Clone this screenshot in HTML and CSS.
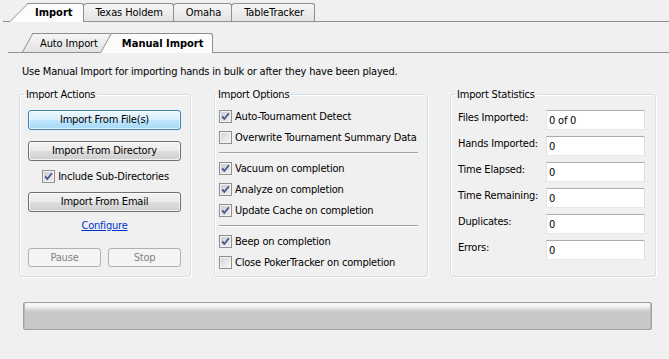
FILE: index.html
```html
<!DOCTYPE html>
<html lang="en">
<head>
  <meta charset="UTF-8" />
  <title>Import</title>
  <link rel="stylesheet" href="styles.css">
</head>
<body>

  <div class="tabbar tabbar-main">
    <div class="tab tab-active tab-first slant-wide">Import</div>
    <div class="tab">Texas Holdem</div>
    <div class="tab">Omaha</div>
    <div class="tab">TableTracker</div>
  </div>

  <div class="tabbar tabbar-sub">
    <div class="tab tab-first slant-narrow">Auto Import</div>
    <div class="tab tab-active slant-narrow">Manual Import</div>
  </div>

  <div class="page">
    <p class="intro">Use Manual Import for importing hands in bulk or after they have been played.</p>

    <div class="groups">
      <fieldset class="group group-actions">
        <legend>Import Actions</legend>
        <button class="btn btn-focus">Import From File(s)</button>
        <button class="btn">Import From Directory</button>
        <label class="check-row check-center">
          <span class="cb checked"><svg viewBox="0 0 9 9" width="9" height="9"><path d="M1.2 4.4l2.1 2.6L7.9 1.3" fill="none" stroke="#3f5183" stroke-width="1.7"/></svg></span>
          Include Sub-Directories
        </label>
        <button class="btn">Import From Email</button>
        <a class="link" href="#">Configure</a>
        <div class="btn-pair">
          <button class="btn" disabled>Pause</button>
          <button class="btn" disabled>Stop</button>
        </div>
      </fieldset>

      <fieldset class="group group-options">
        <legend>Import Options</legend>
        <label class="check-row">
          <span class="cb checked"><svg viewBox="0 0 9 9" width="9" height="9"><path d="M1.2 4.4l2.1 2.6L7.9 1.3" fill="none" stroke="#3f5183" stroke-width="1.7"/></svg></span>
          Auto-Tournament Detect
        </label>
        <label class="check-row">
          <span class="cb"></span>
          Overwrite Tournament Summary Data
        </label>
        <div class="sep"></div>
        <label class="check-row">
          <span class="cb checked"><svg viewBox="0 0 9 9" width="9" height="9"><path d="M1.2 4.4l2.1 2.6L7.9 1.3" fill="none" stroke="#3f5183" stroke-width="1.7"/></svg></span>
          Vacuum on completion
        </label>
        <label class="check-row">
          <span class="cb checked"><svg viewBox="0 0 9 9" width="9" height="9"><path d="M1.2 4.4l2.1 2.6L7.9 1.3" fill="none" stroke="#3f5183" stroke-width="1.7"/></svg></span>
          Analyze on completion
        </label>
        <label class="check-row">
          <span class="cb checked"><svg viewBox="0 0 9 9" width="9" height="9"><path d="M1.2 4.4l2.1 2.6L7.9 1.3" fill="none" stroke="#3f5183" stroke-width="1.7"/></svg></span>
          Update Cache on completion
        </label>
        <div class="sep"></div>
        <label class="check-row">
          <span class="cb checked"><svg viewBox="0 0 9 9" width="9" height="9"><path d="M1.2 4.4l2.1 2.6L7.9 1.3" fill="none" stroke="#3f5183" stroke-width="1.7"/></svg></span>
          Beep on completion
        </label>
        <label class="check-row">
          <span class="cb"></span>
          Close PokerTracker on completion
        </label>
      </fieldset>

      <fieldset class="group group-stats">
        <legend>Import Statistics</legend>
        <div class="stat"><span class="stat-label">Files Imported:</span><span class="stat-value">0 of 0</span></div>
        <div class="stat"><span class="stat-label">Hands Imported:</span><span class="stat-value">0</span></div>
        <div class="stat"><span class="stat-label">Time Elapsed:</span><span class="stat-value">0</span></div>
        <div class="stat"><span class="stat-label">Time Remaining:</span><span class="stat-value">0</span></div>
        <div class="stat"><span class="stat-label">Duplicates:</span><span class="stat-value">0</span></div>
        <div class="stat"><span class="stat-label">Errors:</span><span class="stat-value">0</span></div>
      </fieldset>
    </div>

    <div class="progress"></div>
  </div>

</body>
</html>
```

FILE: styles.css
```css
:root {
  --bg: #f0f0f0;
  --tab-border: #8e8f8f;
  --group-border: #d5dfe5;
  --btn-border: #707070;
}

body {
  margin: 0;
  background: var(--bg);
  color: #000;
  font-family: "DejaVu Sans Condensed", "DejaVu Sans", sans-serif;
  font-stretch: condensed;
  font-size: 11px;
  line-height: 13px;
  letter-spacing: -0.2px;
}

/* tabs */

.tabbar {
  display: flex;
  align-items: flex-end;
  border-bottom: 1px solid var(--tab-border);
}

.tabbar-main {
  margin-left: 3px;
  padding-top: 3px;
}

.tabbar-sub {
  margin-left: 8px;
  padding-top: 11px;
}

.tab {
  position: relative;
  z-index: 1;
  height: 18px;
  box-sizing: border-box;
  margin-left: -1px;
  padding: 2px 10px 0 12px;
  border: 1px solid var(--tab-border);
  border-bottom: 0;
  border-radius: 4px 3px 0 0;
  background: linear-gradient(#f6f6f6, #e3e3e3);
  line-height: 14px;
  letter-spacing: -0.1px;
  white-space: nowrap;
}

.tabbar-sub .tab {
  height: 19px;
  padding-top: 3px;
}

.tab-active {
  z-index: 2;
  height: 19px;
  margin-bottom: -1px;
  background: #fcfcfc;
  font-weight: bold;
  letter-spacing: 0;
}

.tabbar-sub .tab-active {
  height: 20px;
}

.slant-wide,
.slant-narrow {
  border-left: 0;
  border-top-left-radius: 0;
}

.slant-wide::before,
.slant-narrow::before {
  content: "";
  position: absolute;
  z-index: -1;
  top: -1px;
  bottom: 0;
  width: 24px;
  border-left: 1px solid var(--tab-border);
  border-top: 1px solid var(--tab-border);
  background: inherit;
  transform-origin: bottom left;
}

.slant-wide {
  padding-left: 8px;
}

.slant-wide::before {
  left: -18px;
  transform: skewX(-45deg);
}

.slant-narrow::before {
  left: -11px;
  transform: skewX(-29deg);
}

.tabbar-main .tab-first {
  margin-left: 24px;
}

.tabbar-sub .tab-first {
  margin-left: 25px;
  padding-left: 7px;
  padding-right: 13px;
}

.tabbar-sub .tab-active {
  padding-left: 11px;
  padding-right: 9px;
}

/* page */

.page {
  padding: 0 13px 0 19px;
}

.intro {
  margin: 12px 0 0 3px;
}

.groups {
  display: flex;
  align-items: stretch;
  margin-top: 10px;
}

.group {
  flex: none;
  box-sizing: border-box;
  min-width: 0;
  min-inline-size: 0;
  margin: 0;
  border: 1px solid var(--group-border);
  border-radius: 3px;
  box-shadow: inset 1px 1px #fff, 1px 1px #fff;
}

.group legend {
  padding: 0 2px;
  line-height: 13px;
}

.group-actions {
  width: 172px;
  padding: 9px 9px 9px 8px;
  display: flex;
  flex-direction: column;
}

.group-actions legend {
  margin-left: -4px;
}

.group-options {
  width: 214px;
  margin-left: 23px;
  padding: 5px 9px 3px 4px;
}

.group-options legend {
  margin-left: -3px;
}

.group-stats {
  width: 206px;
  margin-left: 22px;
  padding: 9px 9px 0 7px;
}

.group-stats legend {
  margin-left: -3px;
}

/* buttons */

.btn {
  display: block;
  width: 100%;
  height: 20px;
  padding: 0;
  border: 1px solid var(--btn-border);
  border-radius: 3px;
  background: linear-gradient(#f2f2f2 0%, #ebebeb 48%, #dddddd 52%, #cfcfcf 100%);
  box-shadow: inset 0 0 0 1px rgba(255, 255, 255, 0.7);
  font: inherit;
  letter-spacing: inherit;
  color: #000;
  line-height: 16px;
  margin-bottom: 11px;
}

.btn-focus {
  border-color: #3c7fb1;
  background: linear-gradient(#eaf6fd 0%, #d9f0fc 48%, #bee6fd 52%, #a7d9f5 100%);
}

.btn:disabled {
  border-color: #adb2b5;
  background: #f4f4f4;
  box-shadow: none;
  color: #838383;
}

.btn-pair {
  display: flex;
  gap: 7px;
  margin-top: 16px;
}

.btn-pair .btn {
  height: 19px;
  margin: 0;
}

.link {
  display: block;
  margin-top: -4px;
  text-align: center;
  color: #0033cc;
  text-decoration: underline;
}

/* checkboxes */

.check-row {
  display: flex;
  align-items: center;
  gap: 3px;
  height: 21px;
  white-space: nowrap;
}

.check-center {
  justify-content: center;
  height: 14px;
  margin: -3px 0 9px;
  padding-left: 2px;
}

.cb {
  display: inline-flex;
  align-items: center;
  justify-content: center;
  flex: none;
  width: 13px;
  height: 13px;
  box-sizing: border-box;
  border: 1px solid #8f8f8f;
  background: linear-gradient(135deg, #d0d3d8, #f7f7f7);
  box-shadow: inset 0 0 0 1px #f2f2f2;
}

.cb.checked {
  background: linear-gradient(135deg, #c6cad3, #eef0f4);
}

.sep {
  height: 1px;
  margin: 4px 0 5px;
  background: #a0a0a0;
  box-shadow: 0 1px #fff;
}

/* statistics */

.stat {
  display: flex;
  height: 20px;
  margin-bottom: 6px;
}

.stat-label {
  width: 88px;
  padding-top: 1px;
  line-height: 14px;
}

.stat-value {
  width: 99px;
  height: 20px;
  box-sizing: border-box;
  padding: 3px 0 0 2px;
  border: 1px solid;
  border-color: #abadb3 #dbdfe6 #e3e9ef #e2e3ea;
  background: #fff;
}

/* progress */

.progress {
  height: 28px;
  box-sizing: border-box;
  margin: 25px 4px 0;
  border: 1px solid #a0a0a0;
  border-radius: 2px;
  background: linear-gradient(#f6f6f6 0, #f6f6f6 3px, #dcdcdc 6px, #c9c9c9 9px, #c8c8c8 100%);
  box-shadow: inset 1px 0 #b8b8b8, inset -1px 0 #b8b8b8;
}
```
